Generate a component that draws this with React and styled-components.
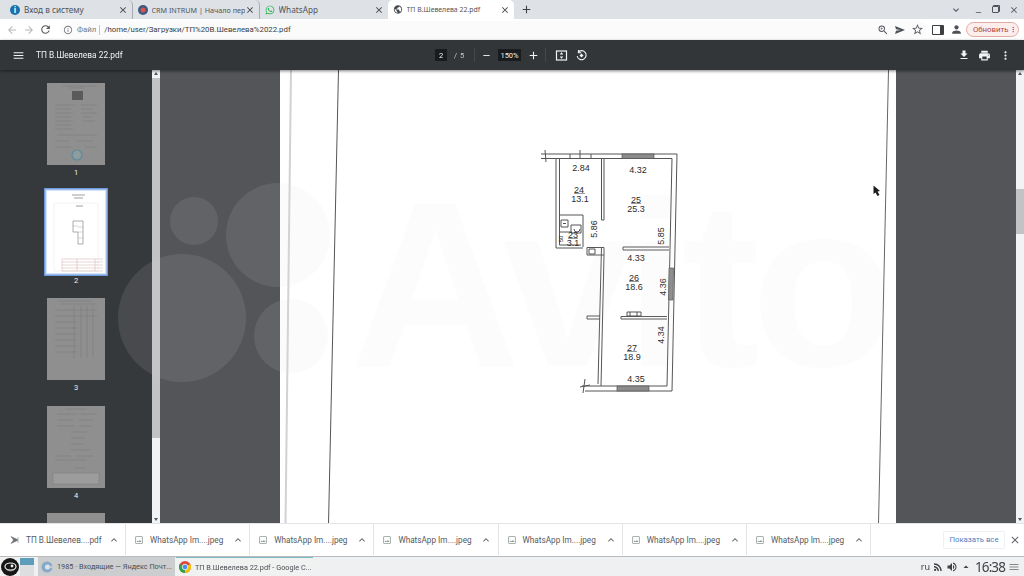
import React from "react";
import styled, { createGlobalStyle } from "styled-components";
import {
  MdArrowBack,
  MdArrowForward,
  MdRefresh,
  MdInfoOutline,
  MdZoomIn,
  MdStarBorder,
  MdPerson,
  MdMoreVert,
  MdClose,
  MdAdd,
  MdRemove,
  MdMenu,
  MdFileDownload,
  MdPrint,
  MdKeyboardArrowDown,
  MdKeyboardArrowUp,
  MdOutlineImage,
  MdPublic,
  MdRssFeed,
  MdVolumeUp,
  MdArrowDropUp
} from "react-icons/md";
import { FaWhatsapp } from "react-icons/fa";

const GlobalStyle = createGlobalStyle`
  html, body {
    margin: 0;
    padding: 0;
    overflow: hidden;
    background: #fff;
  }
`;

const Screen = styled.div`
  position: relative;
  width: 1024px;
  height: 576px;
  overflow: hidden;
  display: flex;
  flex-direction: column;
  font-family: Roboto, "Noto Sans", sans-serif;
  filter: blur(0.35px);
`;

/* chrome tabs */
const TabStrip = styled.div`
  height: 19px;
  flex: none;
  display: flex;
  align-items: stretch;
  padding-left: 5px;
  background: #dee1e6;
  color: #50545a;
  font-family: "Noto Sans", sans-serif;
`;

const Tab = styled.div`
  width: ${props => props.width}px;
  display: flex;
  align-items: center;
  padding: 0 4px 0 5px;
  box-sizing: border-box;
  border-radius: 5px 5px 0 0;
  background: ${props => (props.active ? "#ffffff" : "transparent")};
  border-right: ${props => (props.divider ? "1px solid #a9abb0" : "0")};
  font-size: ${props => props.size}px;
  white-space: nowrap;
`;

const TabIcon = styled.span`
  width: 10px;
  height: 10px;
  margin-right: 4px;
  flex: none;
  display: flex;
  align-items: center;
  justify-content: center;
  border-radius: 50%;
  background: ${props => props.bg || "transparent"};
  color: ${props => props.fg || "#fff"};
  font-size: 8px;
  font-weight: 700;
`;

const TabTitle = styled.span`
  flex: 1;
  overflow: hidden;
`;

const TabClose = styled(MdClose)`
  flex: none;
  font-size: 10px;
  color: #3c4043;
`;

const NewTab = styled(MdAdd)`
  align-self: center;
  margin-left: 6px;
  font-size: 13px;
  color: #3c4043;
`;

const WindowButtons = styled.div`
  margin-left: auto;
  display: flex;
  align-items: center;
  gap: 6px;
  padding-right: 5px;
  color: #50545a;
`;

const RestoreIcon = styled.span`
  width: 5px;
  height: 5px;
  margin: 0 4px 0 3px;
  border: 1.5px solid #50545a;
  border-radius: 1px;
  box-shadow: 1px -1px 0 #50545a;
`;

/* address bar */
const AddressBar = styled.div`
  height: 21px;
  flex: none;
  display: flex;
  align-items: center;
  padding-left: 3px;
  background: #ffffff;
  color: #5f6368;
  font-size: 13px;
`;

const NavButton = styled.span`
  width: 17px;
  display: flex;
  justify-content: center;
  color: ${props => (props.muted ? "#b5b8bc" : "#55595e")};
  font-size: ${props => props.size || 12}px;
`;

const Omnibox = styled.div`
  margin-left: 6px;
  width: 867px;
  height: 17px;
  display: flex;
  align-items: center;
  padding: 0 0 0 3px;
  box-sizing: border-box;
  border-radius: 9px;
  background: #fbfbfc;
  font-size: 7.8px;
`;

const SiteInfo = styled.span`
  display: flex;
  align-items: center;
  gap: 4px;
  padding-right: 3px;
  margin-right: 4px;
  color: #75797e;
  border-right: 1px solid #c4c6c9;
  line-height: 10px;
`;

const Url = styled.span`
  flex: 1;
  color: #3a3d41;
  font-size: 7.8px;
`;

const OmniIcons = styled.span`
  display: flex;
  align-items: center;
  gap: 5px;
  padding-right: 3px;
  font-size: 12px;
  color: #55595e;
`;

const ToolSlot = styled.span`
  width: 18px;
  display: flex;
  justify-content: center;
  color: #4d5156;
  font-size: 13px;
`;

const PanelIcon = styled.span`
  width: 7px;
  height: 8px;
  border: 1.5px solid #3c4043;
  border-right-width: 4px;
  border-radius: 1px;
`;

const UpdatePill = styled.div`
  margin-left: 1px;
  width: 53px;
  height: 15px;
  display: flex;
  align-items: center;
  justify-content: space-between;
  padding: 0 1px 0 6px;
  box-sizing: border-box;
  border: 1px solid #e3aaa4;
  border-radius: 8px;
  background: #fbeeed;
  color: #b3473e;
  font-size: 7.8px;
`;

/* pdf viewer toolbar */
const PdfToolbar = styled.div`
  position: relative;
  z-index: 2;
  height: 30px;
  flex: none;
  display: flex;
  align-items: center;
  background: #323639;
  color: #f1f3f4;
  box-shadow: 0 1px 3px rgba(0, 0, 0, 0.5);
`;

const PdfButton = styled.span`
  width: ${props => props.width || 20}px;
  margin-left: ${props => props.left || 0}px;
  flex: none;
  display: flex;
  justify-content: center;
  font-size: ${props => props.size || 13}px;
`;

const PdfTitle = styled.span`
  width: 399px;
  margin-left: 8px;
  flex: none;
  font-size: 8.4px;
  white-space: nowrap;
`;

const NumberBox = styled.span`
  width: ${props => props.width}px;
  height: 12px;
  flex: none;
  display: flex;
  align-items: center;
  justify-content: center;
  background: #191b1c;
  font-size: 7.5px;
`;

const PageTotal = styled.span`
  width: 27px;
  padding-left: 7px;
  box-sizing: border-box;
  flex: none;
  color: #c5c8ca;
  font-size: 7.5px;
  word-spacing: 1px;
`;

const ToolDivider = styled.span`
  width: 1px;
  height: 14px;
  flex: none;
  background: #45494c;
`;

const ToolSpacer = styled.span`
  flex: 1;
`;

/* viewer */
const Viewer = styled.div`
  flex: 1;
  min-height: 0;
  display: flex;
`;

const Sidebar = styled.div`
  width: 152px;
  flex: none;
  padding-top: 13px;
  box-sizing: border-box;
  overflow: hidden;
  display: flex;
  flex-direction: column;
  align-items: center;
  background: #36393c;
`;

const ThumbItem = styled.div`
  height: 107.5px;
  flex: none;
  display: flex;
  flex-direction: column;
  align-items: center;
`;

const Thumb = styled.div`
  width: 58px;
  height: 82px;
  flex: none;
  background: ${props => (props.selected ? "#ffffff" : "#8f8f8f")};
  box-shadow: ${props =>
    props.selected ? "0 0 0 1.5px #d3e2f6, 0 0 0 3px #6d9bdc" : "none"};

  svg {
    display: block;
  }
`;

const ThumbLabel = styled.span`
  margin-top: 2px;
  color: #f0f0f0;
  font-size: 7.5px;
  line-height: 12px;
`;

const ScrollTrack = styled.div`
  width: 8px;
  flex: none;
  display: flex;
  flex-direction: column;
  background: #f1f3f4;
`;

const ScrollArrow = styled.span`
  height: ${props => props.space}px;
  flex: none;
  display: flex;
  justify-content: center;
  align-items: ${props => (props.down ? "flex-end" : "flex-start")};
  padding: 2px 0;
  box-sizing: border-box;

  &::before {
    content: "";
    border-left: 2px solid transparent;
    border-right: 2px solid transparent;
    border-${props => (props.down ? "top" : "bottom")}: 3px solid #55585b;
  }
`;

const ScrollThumb = styled.span`
  height: ${props => props.length}px;
  flex: none;
  background: #c2c3c5;
`;

const Canvas = styled.div`
  flex: 1;
  display: flex;
  justify-content: center;
  overflow: hidden;
  background: #535559;
`;

const Page = styled.div`
  width: 616px;
  background: #ffffff;

  svg {
    display: block;
  }
`;

/* downloads */
const DownloadBar = styled.div`
  height: 33px;
  flex: none;
  display: flex;
  align-items: stretch;
  box-sizing: border-box;
  padding-bottom: 1px;
  border-top: 1px solid #e4e5e6;
  background: #ffffff;
`;

const DownloadItem = styled.div`
  width: ${props => props.width || 124.2}px;
  flex: none;
  display: flex;
  align-items: center;
  padding-left: ${props => props.inset || 8}px;
  box-sizing: border-box;
  border-right: 1px solid #e2e3e5;
  color: #55595e;
  font-size: 8.2px;
  white-space: nowrap;
`;

const ItemIcon = styled.span`
  width: 10px;
  margin-right: 6px;
  flex: none;
  display: flex;
  justify-content: center;
  color: ${props => props.color || "#8e9a92"};
  font-size: 10px;
`;

const ItemName = styled.span`
  width: 82px;
  flex: none;
`;

const ItemChevron = styled(MdKeyboardArrowUp)`
  flex: none;
  font-size: 12px;
  color: #6b6f73;
`;

const ShowAll = styled.span`
  margin-left: auto;
  align-self: center;
  width: 62px;
  height: 18px;
  display: flex;
  align-items: center;
  justify-content: center;
  border: 1px solid #edf0f4;
  border-radius: 2px;
  box-sizing: border-box;
  color: #4f7fc0;
  font-size: 7.8px;
`;

const BarClose = styled(MdClose)`
  align-self: center;
  margin: 0 3px 0 4px;
  font-size: 12px;
  color: #5f6368;
`;

/* desktop panel */
const Taskbar = styled.div`
  height: 20px;
  flex: none;
  display: flex;
  align-items: stretch;
  box-sizing: border-box;
  border-top: 1px solid #b9bbbc;
  background: #eff0f1;
  color: #4b4f53;
  font-size: 7.3px;
`;

const StartButton = styled.span`
  width: 19px;
  margin-left: 1px;
  flex: none;
  display: flex;
  align-items: center;
`;

const Pager = styled.span`
  width: 14px;
  margin: 1px 4px 0 0;
  flex: none;
  display: flex;
  flex-direction: column;

  &::before {
    content: "";
    height: 7px;
    background: #5d9dbb;
  }

  &::after {
    content: "";
    flex: 1;
    background: #dcdedf;
  }
`;

const TaskButton = styled.span`
  width: 137px;
  flex: none;
  display: flex;
  align-items: center;
  gap: 4px;
  padding-left: 3px;
  box-sizing: border-box;
  white-space: nowrap;
  background: ${props => (props.active ? "#f0f2f2" : "#cbcdce")};
  border-top: ${props => (props.active ? "1.5px solid #79bcc6" : "0")};
  margin-right: 1px;

  svg {
    flex: none;
  }
`;

const Tray = styled.span`
  margin-left: auto;
  display: flex;
  align-items: center;
  padding-right: 4px;
  color: #3e4246;
  font-family: "Noto Sans", sans-serif;
`;

const TrayText = styled.span`
  margin-right: 1px;
  font-size: 9px;
`;

const TrayIcon = styled.span`
  width: 14px;
  display: flex;
  justify-content: center;
  font-size: 12px;
`;

const Clock = styled.span`
  margin: 0 2px 0 2px;
  font-size: 13.5px;
  letter-spacing: -0.9px;
  line-height: 18px;
`;

const TrayMenu = styled(MdMenu)`
  margin-left: 1px;
  font-size: 12px;
  color: #85888b;
`;

/* the grey logo laid over the whole shot */
const Watermark = styled.svg`
  position: absolute;
  left: 0;
  top: 0;
  z-index: 5;
  pointer-events: none;
`;

const WatermarkWord = styled.text`
  font-family: "Liberation Sans", sans-serif;
  font-size: 236px;
  font-weight: 700;
  letter-spacing: -9px;
  fill: rgb(205, 205, 205);
  fill-opacity: 0.06;
`;

const planLabels = [
  ["2.84", 581, 170],
  ["4.32", 638, 172],
  ["24", 579, 192],
  ["13.1", 580, 200.5],
  ["25", 636, 202],
  ["25.3", 636, 210.5],
  ["4.33", 636, 260],
  ["26", 634, 280],
  ["18.6", 634, 288.5],
  ["27", 632, 350],
  ["18.9", 632, 358.5],
  ["4.35", 636, 381],
  ["23", 573, 237],
  ["3.1", 573, 245]
];

const planLabelsVertical = [
  ["5.86", 597, 228],
  ["5.85", 664, 235],
  ["4.36", 666, 286],
  ["4.34", 664, 334]
];

const FloorPlan = () => (
  <svg width="616" height="454" viewBox="280 69 616 454">
    {/* scan edges */}
    <path d="M291 69 L285.5 523" stroke="#d2d2d2" strokeWidth="2" />
    <path d="M338.5 69 L328.5 523" stroke="#555" strokeWidth="1" fill="none" />
    <path d="M888.5 69 L878.5 523" stroke="#666" strokeWidth="1" fill="none" />

    <g fill="none" stroke="#555" strokeWidth="1">
      {/* outer walls */}
      <path d="M541 153 H677 L672 390 H585" />
      <path d="M541 157.5 H604" />
      <path d="M604 157.5 H672 L667 385 H598" />
      <path d="M545 149 L546 161 M580 149 V158 M570 153 V157 M591 153 V157" />
      {/* left room */}
      <path d="M556 157 V247 H583 M559.5 157 V214 H583 V246" />
      <path d="M559.5 214 V244 H581" />
      {/* partition 24 / 25 */}
      <path d="M601.5 157 V219 H604 V157" />
      {/* inner long wall */}
      <path d="M601.5 246 L598 383 M604 254 L601 385" />
      <path d="M587 246.5 H604 V254 H587 Z" />
      <path d="M589 248 H595 V253 H589 Z" />
      {/* partitions */}
      <path d="M623 246 H669 M623 249 H669 M623 246 V249" />
      <path d="M621 315.5 H667 M621 318 H667 M621 315.5 V318" />
      <path d="M587 315 H600 M587 318 H600 M587 315 V318" />
      <path d="M627 311 H641 V315 H627 Z M630 311 V315 M637 311 V315" />
      {/* bottom wall */}
      <path d="M582 385 H598 M585 378 L583 392 M580 386 L590 384" />
      {/* bathroom bits */}
      <path d="M561 219 H568 V226 H561 Z M563 222.5 H566" />
      <path d="M571 224 H581 V232 H571 Z" />
      <path d="M574 228 a3 3 0 1 0 6 0" />
      <path d="M559.5 231 H572" />
      {/* fraction bars */}
      <path d="M574 192.5 H585 M631 202.5 H641 M629 280.5 H639 M627 350.5 H637 M568 237.5 H578" strokeWidth="0.6" />
    </g>

    {/* windows */}
    <g fill="#8c8c8c" stroke="#555" strokeWidth="0.7">
      <rect x="622" y="153" width="32" height="4.5" />
      <rect x="617" y="385" width="32" height="5" />
      <path d="M669 267 L673.5 267 L673 299 L668.5 299 Z" />
    </g>

    <g fill="#2b2b2b" fontFamily="'Liberation Sans', sans-serif" fontSize="9" textAnchor="middle">
      {planLabels.map(([value, x, y]) => (
        <text key={value} x={x} y={y}>
          {value}
        </text>
      ))}
      {planLabelsVertical.map(([value, x, y]) => (
        <text key={value} x={x} y={y} transform={`rotate(-90 ${x} ${y})`}>
          {value}
        </text>
      ))}
      <text x="561" y="240" fontSize="6" transform="rotate(-90 561 238)">
        50
      </text>
    </g>

    {/* mouse pointer */}
    <path d="M873.5 184.5 L873.5 193 L875.5 191.5 L877.5 195 L879.5 194 L877.5 190.5 L880 190 Z" fill="#1c1c1c" />
  </svg>
);

const scanLines = {
  1: "M15 3 H50 M22 5 H38 M8 22 H28 M34 22 H50 M8 26 H24 M34 26 H46 M8 30 H26 M34 30 H50 M8 34 H24 M36 34 H44 M8 38 H26 M36 38 H48 M8 42 H24 M8 46 H26 M10 52 H50 M8 58 H22 M30 58 H46 M8 64 H24 M38 64 H50",
  3: "M12 3 H44 M14 6 H50 M8 12 H50 M8 18 H50 M8 24 H30 M8 30 H30 M8 36 H30 M8 42 H30 M8 48 H30 M8 54 H30 M27 8 V60 M34 8 V60 M40 8 V60 M46 8 V60",
  4: "M18 3 H40 M10 8 H30 M32 8 H50 M10 14 H26 M32 14 H46 M10 20 H28 M32 20 H44 M24 26 H40 M24 32 H38 M24 38 H36 M24 44 H44 M8 50 H24 M30 50 H46 M8 54 H40 M28 62 H38"
};

const ThumbPage = ({ kind }) => {
  if (kind === 2) {
    return (
      <svg width="58" height="82" viewBox="0 0 58 82">
        <path d="M25 4 H38 M27 7 H36 M29 15 H36" stroke="#777" strokeWidth="0.7" />
        <path d="M7 12 H51 V80 H7 Z" fill="none" stroke="#e4e4e4" strokeWidth="0.5" />
        <path d="M26 30 H36 V53 H31 V41 H26 Z" fill="#fff" stroke="#8a8a8a" strokeWidth="0.7" />
        <path d="M26 35 H31 M31 36 H36 M31 41 H36 M31 47 H36" stroke="#999" strokeWidth="0.4" />
        <path d="M15 68 H56 M15 71 H56 M15 74 H56 M15 77 H56 M15 80 H56 M15 68 V80 M30 68 V80 M48 68 V80" stroke="#cda9a9" strokeWidth="0.5" />
      </svg>
    );
  }
  return (
    <svg width="58" height="82" viewBox="0 0 58 82">
      <path d={scanLines[kind]} stroke="#7c7c7c" strokeWidth="0.6" fill="none" />
      {kind === 1 && (
        <g>
          <rect x="25" y="8" width="11" height="9" fill="#5a5a5a" />
          <circle cx="30" cy="72" r="5" fill="#8c9c9f" stroke="#5b8a9a" strokeWidth="1.2" />
        </g>
      )}
      {kind === 4 && <rect x="6" y="67" width="46" height="11" fill="#9c9c9c" stroke="#7c7c7c" strokeWidth="0.5" />}
    </svg>
  );
};

const ChromeLogo = () => (
  <svg width="12" height="12" viewBox="0 0 24 24">
    <circle cx="12" cy="12" r="12" fill="#dd4b3e" />
    <path d="M12 12 L1.6 6 A12 12 0 0 0 12 24 Z" fill="#2fa24c" />
    <path d="M12 12 L12 24 A12 12 0 0 0 22.4 6 Z" fill="#f4c20d" />
    <circle cx="12" cy="12" r="5.5" fill="#4a8af4" stroke="#fff" strokeWidth="1.5" />
  </svg>
);

const MailLogo = () => (
  <svg width="12" height="12" viewBox="0 0 24 24">
    <circle cx="12" cy="12" r="11" fill="#86a9c8" />
    <circle cx="13" cy="12" r="5" fill="#dce6ee" />
    <path d="M14 12 L23 9 V15 Z" fill="#cbcdce" />
  </svg>
);

const StartLogo = () => (
  <svg width="18" height="18" viewBox="0 0 18 18">
    <circle cx="9" cy="9" r="9" fill="#161616" />
    <ellipse cx="9.5" cy="8.5" rx="5.5" ry="3.5" fill="none" stroke="#eee" strokeWidth="1.2" />
    <path d="M5 11 C8 14 13 13 15 10" fill="none" stroke="#bbb" strokeWidth="1" />
    <circle cx="11" cy="8" r="1.4" fill="#eee" />
  </svg>
);

const ShareIcon = () => (
  <svg width="12" height="12" viewBox="0 0 12 12">
    <path d="M1 2 L11 6 L1 10 L2 6.8 L6.5 6 L2 5.2 Z" fill="#4d5156" />
  </svg>
);

const PdfFileIcon = () => (
  <svg width="10" height="10" viewBox="0 0 10 10">
    <path d="M1 1.5 L8.5 5 L1 8.5 L3.5 5 Z M7 3 H9 M7 7 H9" fill="#6b6f73" stroke="#6b6f73" strokeWidth="0.5" />
  </svg>
);

const FitIcon = () => (
  <svg width="13" height="13" viewBox="0 0 13 13" fill="none" stroke="#f1f3f4">
    <rect x="1.5" y="2" width="10" height="9" strokeWidth="1.2" />
    <path d="M6.5 3.5 V5 M6.5 9.5 V8 M5 5 H8 M5 8 H8" strokeWidth="1" />
  </svg>
);

const RotateIcon = () => (
  <svg width="13" height="13" viewBox="0 0 13 13" fill="none" stroke="#f1f3f4">
    <path d="M3 3.5 A4.5 4.5 0 1 1 2.2 7" strokeWidth="1.1" />
    <path d="M3.5 1 V3.8 H6.2" strokeWidth="1.1" />
    <path d="M4.5 6.5 L6.5 4.5 L8.5 6.5 L6.5 8.5 Z" fill="#f1f3f4" stroke="none" />
  </svg>
);

const downloads = [
  "WhatsApp Im....jpeg",
  "WhatsApp Im....jpeg",
  "WhatsApp Im....jpeg",
  "WhatsApp Im....jpeg",
  "WhatsApp Im....jpeg",
  "WhatsApp Im....jpeg"
];

const App = () => (
  <Screen>
    <GlobalStyle />

    <TabStrip>
      <Tab width={127.5} size={8.2} divider>
        <TabIcon bg="#1b6fa8">i</TabIcon>
        <TabTitle>Вход в систему</TabTitle>
        <TabClose />
      </Tab>
      <Tab width={127} size={7.2} divider>
        <TabIcon bg="#3d5a80">
          <svg width="6" height="6" viewBox="0 0 6 6">
            <circle cx="3" cy="3" r="2.5" fill="#d9534f" />
          </svg>
        </TabIcon>
        <TabTitle>CRM INTRUM | Начало пер</TabTitle>
        <TabClose />
      </Tab>
      <Tab width={128} size={8.2}>
        <TabIcon fg="#25b24f">
          <FaWhatsapp size={10} />
        </TabIcon>
        <TabTitle>WhatsApp</TabTitle>
        <TabClose />
      </Tab>
      <Tab width={126} size={6.9} active>
        <TabIcon fg="#45494e">
          <MdPublic size={11} />
        </TabIcon>
        <TabTitle>ТП В.Шевелева 22.pdf</TabTitle>
        <TabClose />
      </Tab>
      <NewTab />
      <WindowButtons>
        <MdKeyboardArrowDown size={12} style={{ marginRight: 6 }} />
        <MdRemove size={9} style={{ marginTop: 5 }} />
        <RestoreIcon />
        <MdClose size={10} />
      </WindowButtons>
    </TabStrip>

    <AddressBar>
      <NavButton muted><MdArrowBack /></NavButton>
      <NavButton muted><MdArrowForward /></NavButton>
      <NavButton size={13}><MdRefresh /></NavButton>
      <Omnibox>
        <SiteInfo>
          <MdInfoOutline size={10} />
          Файл
        </SiteInfo>
        <Url>/home/user/Загрузки/ТП%20В.Шевелева%2022.pdf</Url>
        <OmniIcons>
          <MdZoomIn />
          <ShareIcon />
          <MdStarBorder size={13} />
        </OmniIcons>
      </Omnibox>
      <ToolSlot style={{ marginLeft: 2 }}><PanelIcon /></ToolSlot>
      <ToolSlot><MdPerson /></ToolSlot>
      <UpdatePill>
        Обновить
        <MdMoreVert size={11} />
      </UpdatePill>
    </AddressBar>

    <PdfToolbar>
      <PdfButton left={8}><MdMenu /></PdfButton>
      <PdfTitle>ТП В.Шевелева 22.pdf</PdfTitle>
      <NumberBox width={12}>2</NumberBox>
      <PageTotal>/ 5</PageTotal>
      <ToolDivider />
      <PdfButton width={23} size={11}><MdRemove /></PdfButton>
      <NumberBox width={23}>150%</NumberBox>
      <PdfButton width={24} size={13}><MdAdd /></PdfButton>
      <ToolDivider />
      <PdfButton left={5}><FitIcon /></PdfButton>
      <PdfButton><RotateIcon /></PdfButton>
      <ToolSpacer />
      <PdfButton width={21} size={12}><MdFileDownload /></PdfButton>
      <PdfButton width={21} size={13}><MdPrint /></PdfButton>
      <PdfButton width={21} size={13}><MdMoreVert /></PdfButton>
      <PdfButton width={8} />
    </PdfToolbar>

    <Viewer>
      <Sidebar>
        {[1, 2, 3, 4, 5].map(n => (
          <ThumbItem key={n}>
            <Thumb selected={n === 2}>
              {n < 5 && <ThumbPage kind={n} />}
            </Thumb>
            <ThumbLabel>{n}</ThumbLabel>
          </ThumbItem>
        ))}
      </Sidebar>
      <ScrollTrack>
        <ScrollArrow space={8} />
        <ScrollThumb length={360} />
        <ToolSpacer />
        <ScrollArrow space={8} down />
      </ScrollTrack>
      <Canvas>
        <Page>
          <FloorPlan />
        </Page>
      </Canvas>
      <ScrollTrack>
        <ScrollArrow space={119} />
        <ScrollThumb length={45} />
        <ToolSpacer />
        <ScrollArrow space={8} down />
      </ScrollTrack>
    </Viewer>

    <DownloadBar>
      <DownloadItem width={126} inset={10}>
        <ItemIcon><PdfFileIcon /></ItemIcon>
        <ItemName>ТП В.Шевелев....pdf</ItemName>
        <ItemChevron />
      </DownloadItem>
      {downloads.map((name, i) => (
        <DownloadItem key={i}>
          <ItemIcon><MdOutlineImage /></ItemIcon>
          <ItemName>{name}</ItemName>
          <ItemChevron />
        </DownloadItem>
      ))}
      <ShowAll>Показать все</ShowAll>
      <BarClose />
    </DownloadBar>

    <Taskbar>
      <StartButton><StartLogo /></StartButton>
      <Pager />
      <TaskButton>
        <MailLogo />
        <span>1985 · Входящие — Яндекс Почт...</span>
      </TaskButton>
      <TaskButton active>
        <ChromeLogo />
        <span>ТП В.Шевелева 22.pdf - Google C...</span>
      </TaskButton>
      <Tray>
        <TrayText>ru</TrayText>
        <TrayIcon><MdRssFeed /></TrayIcon>
        <TrayIcon><MdVolumeUp /></TrayIcon>
        <TrayIcon><MdArrowDropUp /></TrayIcon>
        <Clock>16:38</Clock>
        <TrayMenu />
      </Tray>
    </Taskbar>

    <Watermark width="1024" height="576" viewBox="0 0 1024 576">
      <g fill="rgb(219, 219, 219)" fillOpacity="0.11">
        <circle cx="182" cy="318" r="64" />
        <circle cx="194" cy="221" r="24" />
        <circle cx="278" cy="235" r="52" />
        <circle cx="291" cy="336" r="37" />
      </g>
      <WatermarkWord x="350" y="366">Avito</WatermarkWord>
    </Watermark>
  </Screen>
);

export default App;
